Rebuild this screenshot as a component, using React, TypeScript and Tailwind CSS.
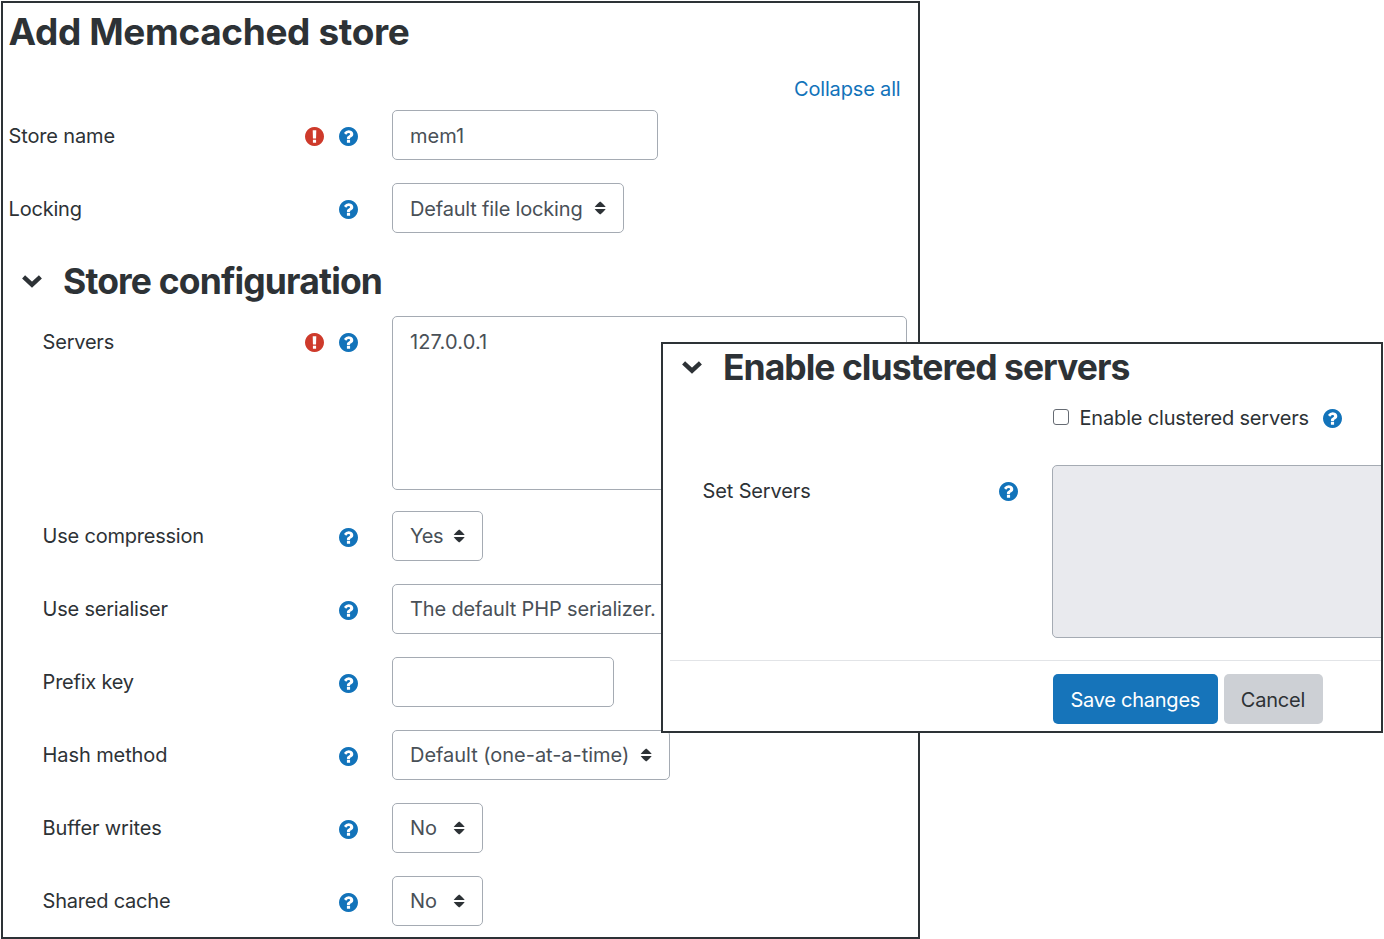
import type { ReactNode } from "react";

function HelpIcon() {
  return (
    <svg viewBox="128 128 1536 1536" className="size-[19px] shrink-0" fill="#1273ba">
      <path d="M1024 1376v-192q0-14-9-23t-23-9h-192q-14 0-23 9t-9 23v192q0 14 9 23t23 9h192q14 0 23-9t9-23zm256-672q0-88-55.5-163t-138.5-116-170-41q-243 0-371 213-15 24 8 42l132 100q7 6 19 6 16 0 25-12 53-68 86-92 34-24 86-24 48 0 85.5 26t37.5 59q0 38-20 61t-68 45q-63 28-115.5 86.5t-52.5 125.5v36q0 14 9 23t23 9h192q14 0 23-9t9-23q0-19 21.5-49.5t54.5-49.5q32-18 49-28.5t46-35 44.5-48 28-60.5 12.5-81zm384 192q0 209-103 385.5t-279.5 279.5-385.5 103-385.5-103-279.5-279.5-103-385.5 103-385.5 279.5-279.5 385.5-103 385.5 103 279.5 279.5 103 385.5z" />
    </svg>
  );
}

function RequiredIcon() {
  return (
    <svg viewBox="128 128 1536 1536" className="size-[19px] shrink-0" fill="#ce3a2b">
      <path d="M896 128q209 0 385.5 103t279.5 279.5 103 385.5-103 385.5-279.5 279.5-385.5 103-385.5-103-279.5-279.5-103-385.5 103-385.5 279.5-279.5 385.5-103zm128 1247v-190q0-14-9-23.5t-22-9.5h-192q-13 0-23 10t-10 23v190q0 13 10 23t23 10h192q13 0 22-9.5t9-23.5zm-2-344l18-621q0-12-10-18-10-8-24-8h-220q-14 0-24 8-10 6-10 18l17 621q0 10 10 17.5t24 7.5h185q14 0 23.5-7.5t10.500-17.5z" />
    </svg>
  );
}

function Chevron() {
  return (
    <svg viewBox="0 0 22 14" className="h-3.5 w-[22px] shrink-0" fill="none" stroke="#2d3236" strokeWidth="4.4">
      <path d="M2.600 2.900 11 10.700l8.400-7.800" strokeLinejoin="miter" />
    </svg>
  );
}

function SortArrows() {
  return (
    <svg viewBox="0 0 12 14" className="h-3.5 w-3 shrink-0" fill="#2d3236">
      <path d="M.7 6 C1.700 4.400 4.200 2 6.200 .4 C8.200 2 10.700 4.400 11.700 6Z" />
      <path d="M.7 8 C1.700 9.600 4.200 12 6.200 13.600 C8.200 12 10.700 9.600 11.700 8Z" />
    </svg>
  );
}

type RowProps = {
  label: string;
  tracking?: string;
  indent?: boolean;
  required?: boolean;
  className?: string;
  children: ReactNode;
};

function Row({ label, tracking = "tracking-[-0.22px]", indent, required, className = "", children }: RowProps) {
  return (
    <div className={`flex items-start ${className}`}>
      <div className={`flex h-[50px] w-[389.4px] shrink-0 items-center pr-8 ${indent ? "pl-[39.6px]" : "pl-[5.6px]"}`}>
        <span className={`grow pt-px ${tracking}`}>{label}</span>
        <div className="flex gap-[15px] pt-[3px] pr-[2.4px]">
          {required && <RequiredIcon />}
          <HelpIcon />
        </div>
      </div>
      {children}
    </div>
  );
}

function Select({ value, width, tracking = "" }: { value: string; width: string; tracking?: string }) {
  return (
    <button
      type="button"
      className={`flex h-[50px] shrink-0 items-center justify-between rounded-[5px] border border-[#a5abb3] bg-white pr-[17px] pl-[16.6px] whitespace-nowrap text-[#495057] ${width}`}
    >
      <span className={`pt-px ${tracking}`}>{value}</span>
      <SortArrows />
    </button>
  );
}

export default function App() {
  return (
    <div className="relative h-[939px] w-[1384px] overflow-hidden bg-white pt-px pl-px font-['Inter','Liberation_Sans',sans-serif] text-[20px] leading-[30px] text-[#2d3236]">
      <main className="flex h-[938px] w-[918.500px] flex-col overflow-hidden border-2 border-[#2d3236]">
        <h1 className="mt-[7px] mb-px pl-[5.5px] text-[37px] leading-[44px] font-bold tracking-[-0.36px]">Add Memcached store</h1>
        <div className="mt-[19px] flex justify-end pr-[17px]">
          <a href="#" className="tracking-[-0.17px] text-[#1273ba]">Collapse all</a>
        </div>
        <Row label="Store name" required tracking="tracking-[-0.15px]" className="mt-[6px]">
          <input
            defaultValue="mem1"
            className="h-[50px] w-[266px] rounded-[5px] border border-[#a5abb3] px-[16.6px] pt-0.5 text-[#495057]"
          />
        </Row>
        <Row label="Locking" className="mt-[23px]">
          <Select value="Default file locking" width="w-[232px]" tracking="tracking-[-0.18px]" />
        </Row>
        <div className="mt-[26px] flex h-[44px] items-center gap-5 pl-[18px]">
          <Chevron />
          <h2 className="pt-0.5 text-[35.5px] leading-[44px] font-bold tracking-[-0.85px]">Store configuration</h2>
        </div>
        <Row label="Servers" indent required className="mt-[13px]">
          <textarea
            defaultValue="127.0.0.1"
            className="h-[174px] w-[515px] resize-none rounded-[5px] border border-[#a5abb3] px-[16.6px] py-[10px] tracking-[0.15px] text-[#495057]"
          />
        </Row>
        <Row label="Use compression" indent className="mt-[20.500px]">
          <Select value="Yes" width="w-[91px]" tracking="tracking-[-0.4px]" />
        </Row>
        <Row label="Use serialiser" indent className="mt-[23.200px]">
          <Select value="The default PHP serializer." width="w-[310px]" tracking="tracking-[-0.15px]" />
        </Row>
        <Row label="Prefix key" indent className="mt-[23px]">
          <input className="h-[50px] w-[222px] rounded-[5px] border border-[#a5abb3] px-[17px]" />
        </Row>
        <Row label="Hash method" indent tracking="tracking-[-0.1px]" className="mt-[23px]">
          <Select value="Default (one-at-a-time)" width="w-[278px]" tracking="tracking-[-0.03px]" />
        </Row>
        <Row label="Buffer writes" indent tracking="tracking-[-0.13px]" className="mt-[23px]">
          <Select value="No" width="w-[91px]" />
        </Row>
        <Row label="Shared cache" indent className="mt-[23px]">
          <Select value="No" width="w-[91px]" />
        </Row>
      </main>

      <section className="absolute top-[342px] left-[661px] flex h-[391px] w-[722px] flex-col overflow-hidden border-2 border-[#2d3236] bg-white">
        <div className="mt-px flex h-[44px] items-center gap-5 pl-[18px]">
          <Chevron />
          <h2 className="pt-0.5 text-[35.5px] leading-[44px] font-bold tracking-[-0.98px]">Enable clustered servers</h2>
        </div>
        <label className="mt-[14px] ml-[390px] flex h-[30px] items-center">
          <input
            type="checkbox"
            className="mb-0.5 size-[16px] shrink-0 appearance-none rounded-[3px] border border-[#666b73] bg-white"
          />
          <span className="ml-[10.500px] tracking-[-0.17px] whitespace-nowrap">Enable clustered servers</span>
          <span className="ml-3.5 pt-px"><HelpIcon /></span>
        </label>
        <Row label="Set Servers" indent tracking="tracking-[-0.15px]" className="mt-[32px]">
          <textarea
            disabled
            className="h-[173px] w-[515px] shrink-0 resize-none rounded-[5px] border border-[#a5abb3] bg-[#e9eaee]"
          />
        </Row>
        <div className="mt-[22px] ml-[7px] border-t border-[#e2e4e7]" />
        <div className="mt-[13px] ml-[390px] flex gap-1.5">
          <button type="button" className="h-[50px] w-[164.500px] rounded-[5px] bg-[#1674ba] pt-0.5 tracking-[-0.25px] text-white">
            Save changes
          </button>
          <button type="button" className="h-[50px] w-[99px] rounded-[5px] bg-[#cdd0d5] pt-0.5 tracking-[-0.2px]">
            Cancel
          </button>
        </div>
      </section>
    </div>
  );
}
